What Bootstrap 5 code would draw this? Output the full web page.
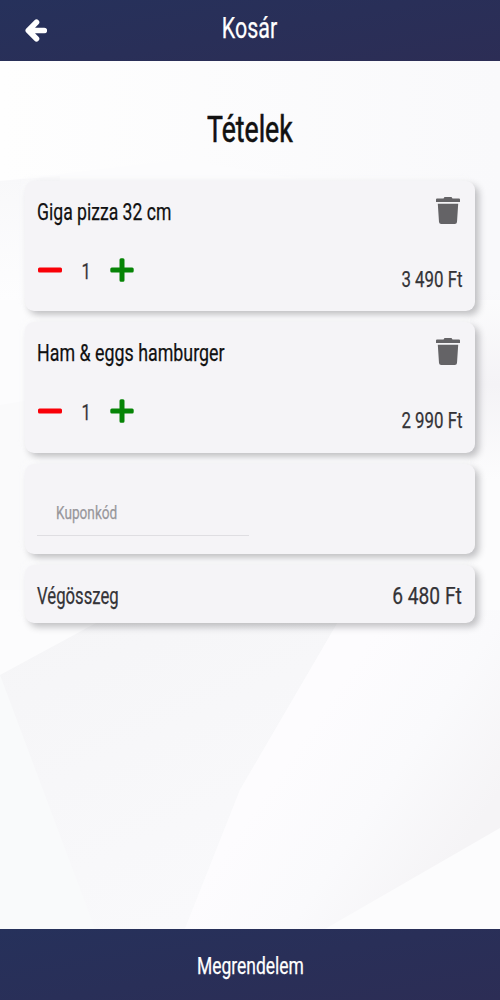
<!DOCTYPE html>
<html lang="hu">
<head>
<meta charset="utf-8">
<meta name="viewport" content="width=device-width, initial-scale=1">
<title>Kosár</title>
<link href="https://cdn.jsdelivr.net/npm/bootstrap@5.3.0/dist/css/bootstrap.min.css" rel="stylesheet">
<style>
body{font-family:Roboto,"Liberation Sans",sans-serif;color:#343337;height:1000px;overflow:hidden;background:#fbfbfd}
.bar{background:linear-gradient(170deg,#26315b,#2c2d55);color:#fff}
.top-bar{height:61px;padding:0 25px}
.top-bar h1{font-size:29px;line-height:56px;height:61px}
.bottom-bar{height:71px;font-size:24px;line-height:74px}
.backdrop{background:url("data:image/svg+xml,%3Csvg xmlns='http://www.w3.org/2000/svg' width='500' height='868' viewBox='0 61 500 868'%3E%3Cdefs%3E%3ClinearGradient id='a' x1='0' y1='0' x2='.5' y2='1'%3E%3Cstop stop-color='%23f5f5f7'/%3E%3Cstop offset='1' stop-color='%23f9f9fb'/%3E%3C/linearGradient%3E%3ClinearGradient id='b' gradientUnits='userSpaceOnUse' x1='300' y1='740' x2='460' y2='850'%3E%3Cstop stop-color='%23fdfcfe'/%3E%3Cstop offset='.5' stop-color='%23fafafc'/%3E%3Cstop offset='1' stop-color='%23f5f4f6'/%3E%3C/linearGradient%3E%3ClinearGradient id='c' x2='0' y2='1'%3E%3Cstop stop-color='%23f8f8fa'/%3E%3Cstop offset='1' stop-color='%23fdfdfe'/%3E%3C/linearGradient%3E%3ClinearGradient id='d' x1='0' x2='1'%3E%3Cstop stop-color='%23fefefe'/%3E%3Cstop offset='1' stop-color='%23f9f9fb'/%3E%3C/linearGradient%3E%3ClinearGradient id='e' x2='0' y2='1'%3E%3Cstop stop-color='%23f4f3f6' stop-opacity='0'/%3E%3Cstop offset='.5' stop-color='%23f4f3f6'/%3E%3Cstop offset='1' stop-color='%23f4f3f6' stop-opacity='0'/%3E%3C/linearGradient%3E%3C/defs%3E%3Cpath fill='%23fcfcfd' d='M0 61h500v868H0z'/%3E%3Cpath fill='url(%23d)' d='M0 61h500v150L180 160 0 181z'/%3E%3Cpath fill='url(%23c)' d='M0 181L60 176V300H0z'/%3E%3Cpath fill='%23f9f9fb' d='M440 190h60v110h-60z'/%3E%3Cpath fill='url(%23e)' d='M470 290h30v190h-30z'/%3E%3Cpath fill='%23f8f9fa' d='M0 405l30-5v190H0z' opacity='.6'/%3E%3Cpath fill='%23f9fafb' d='M0 675l10 5 90 249H0z'/%3E%3Cpath fill='url(%23a)' d='M0 675L120 610 345 610 240 790 185 929H95z'/%3E%3Cpath fill='url(%23b)' d='M345 610H500V828L325 929H185L240 790z'/%3E%3C/svg%3E") top left/500px 868px no-repeat}
.page-title{font-size:36px;line-height:44px;margin:0 0 29px;color:#111;font-weight:400;padding-top:47px;-webkit-text-stroke:.5px}
.cart-list{gap:11px;padding:0 25px}
.tile{background:#f5f4f7;border-radius:9px;box-shadow:4px 4px 7px rgba(40,38,45,.28),-3px -3px 6px rgba(250,250,252,.6);padding:0 13px 0 12px}
.item-tile{height:130.3px}
.item-head{padding:13px 0 0;height:49px;line-height:36px}
.item-name{font-size:24.5px;color:#111}
.bin{margin:3px 2.5px 0 0}
.qty{margin-top:27px;padding-left:1px}
.qty svg{margin-top:.5px}
.qty-n{width:48px;text-align:center;font-size:22px;line-height:24px;padding-top:3px}
.price{font-size:22.5px;line-height:24px;margin-top:37px;margin-right:-1px}
.coupon-tile{height:90px;padding-top:31px}
.coupon{width:212px;height:41px;border-bottom:1px solid #dfdee2;padding-left:19px;font-size:19px;line-height:36px;color:#98979b}
.total-tile{height:58px;font-size:24.5px;line-height:61px}
/* narrow lettering, --sx is the horizontal squeeze */
.nar{display:inline-block;white-space:nowrap;transform:scaleX(var(--sx,.75));-webkit-text-stroke-width:.25px}
.page-title .nar{-webkit-text-stroke-width:.6px}
.nar-l{transform-origin:left}.nar-r{transform-origin:right}
.sx-68{--sx:.682}.sx-72{--sx:.718}.sx-73{--sx:.728}.sx-74{--sx:.74}.sx-78{--sx:.783}
</style>
</head>
<body class="d-flex flex-column">
<header class="bar top-bar d-flex align-items-center justify-content-between">
<svg width="22" height="23" viewBox="0 0 22 23"><path d="M11.500 3.200L3.300 11.500 11.500 19.800M4 11.500H19.300" fill="none" stroke="#fff" stroke-width="5.600" stroke-linecap="round" stroke-linejoin="round"/></svg>
<h1 class="m-0 fw-normal"><span class="nar sx-74">Kosár</span></h1><span class="px-2 me-2"></span>
</header>
<main class="backdrop flex-grow-1">
<h2 class="page-title text-center"><span class="nar sx-74">Tételek</span></h2>
<div class="cart-list d-flex flex-column">
<section class="tile item-tile">
<div class="item-head d-flex justify-content-between"><span class="item-name nar nar-l sx-72">Giga pizza 32 cm</span><svg class="bin" width="24" height="27" viewBox="0 0 24 27" fill="#646366"><path d="M1 1.500H7.500L8.500 0H15.500L16.500 1.500H23Q24 1.500 24 2.500V5H0V2.500Q0 1.500 1 1.500zM1.800 6.700H22.200L21 25Q20.800 27 18.800 27H5.200Q3.200 27 3 25z"/></svg></div>
<div class="d-flex justify-content-between"><div class="qty d-flex"><svg width="24" height="24"><rect y="9.500" width="24" height="5" rx="1.500" fill="#f90008"/></svg><span class="qty-n"><span class="nar">1</span></span><svg width="24" height="24"><path d="M11 .3H13Q14.500 .3 14.500 1.800V9.500H22.200Q23.700 9.500 23.700 11V13Q23.700 14.500 22.200 14.500H14.500V22.200Q14.500 23.700 13 23.700H11Q9.500 23.700 9.500 22.200V14.500H1.800Q.3 14.500 .3 13V11Q.3 9.500 1.800 9.500H9.500V1.800Q9.500 .3 11 .3z" fill="#068406"/></svg></div><span class="price nar nar-r">3 490 Ft</span></div>
</section>
<section class="tile item-tile">
<div class="item-head d-flex justify-content-between"><span class="item-name nar nar-l sx-73">Ham &amp; eggs hamburger</span><svg class="bin" width="24" height="27" viewBox="0 0 24 27" fill="#646366"><path d="M1 1.500H7.500L8.500 0H15.500L16.500 1.500H23Q24 1.500 24 2.500V5H0V2.500Q0 1.500 1 1.500zM1.800 6.700H22.200L21 25Q20.800 27 18.800 27H5.200Q3.200 27 3 25z"/></svg></div>
<div class="d-flex justify-content-between"><div class="qty d-flex"><svg width="24" height="24"><rect y="9.500" width="24" height="5" rx="1.500" fill="#f90008"/></svg><span class="qty-n"><span class="nar">1</span></span><svg width="24" height="24"><path d="M11 .3H13Q14.500 .3 14.500 1.800V9.500H22.200Q23.700 9.500 23.700 11V13Q23.700 14.500 22.200 14.500H14.500V22.200Q14.500 23.700 13 23.700H11Q9.500 23.700 9.500 22.200V14.500H1.800Q.3 14.500 .3 13V11Q.3 9.500 1.800 9.500H9.500V1.800Q9.500 .3 11 .3z" fill="#068406"/></svg></div><span class="price nar nar-r">2 990 Ft</span></div>
</section>
<section class="tile coupon-tile"><div class="coupon"><span class="nar nar-l sx-72">Kuponkód</span></div></section>
<section class="tile total-tile d-flex justify-content-between"><span class="nar nar-l sx-68">Végösszeg</span><span class="nar nar-r sx-78">6 480 Ft</span></section>
</div>
</main>
<footer class="bar bottom-bar text-center"><span class="nar sx-73">Megrendelem</span></footer>
<script src="https://cdn.jsdelivr.net/npm/bootstrap@5.3.0/dist/js/bootstrap.bundle.min.js"></script>
</body>
</html>
